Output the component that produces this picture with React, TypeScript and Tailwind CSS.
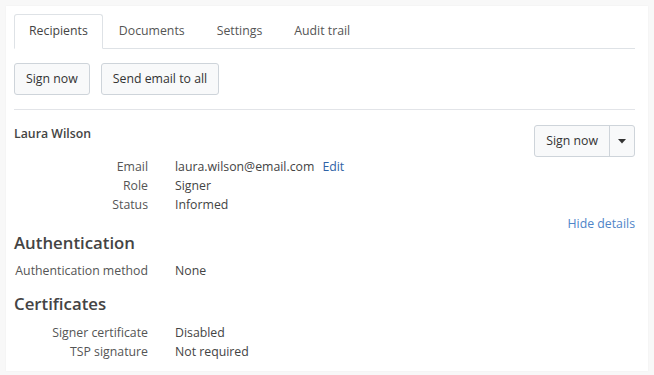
const tabs = ['Recipients', 'Documents', 'Settings', 'Audit trail'];

function Row({ label, children, className = '' }: { label: string; children: React.ReactNode; className?: string }) {
  return (
    <div className={`flex leading-[19px] ${className}`}>
      <div className="w-[134px] shrink-0 text-right whitespace-nowrap text-[#555]">{label}</div>
      <div className="ml-[27px] whitespace-nowrap text-[#444]">{children}</div>
    </div>
  );
}

export default function App() {
  return (
    <div className="min-h-[375px] bg-[#f8f8f8] p-[6px] font-['Open_Sans',sans-serif] text-[12.3px]">
      <div className="bg-white pl-2 pr-[13px] pt-2 pb-[10px] shadow-[0_0_2px_rgba(0,0,0,0.04)]">
        {/* Tabs */}
        <div className="flex border-b border-[#dee2e6] h-[35px]">
          {tabs.map((tab, i) => (
            <div
              key={tab}
              className={
                i === 0
                  ? 'px-[14px] h-[35px] flex items-center border border-[#dee2e6] border-b-white rounded-t-[3px] text-[#444] bg-white'
                  : 'px-[15px] h-[35px] flex items-center text-[#555] border border-transparent'
              }
            >
              {tab}
            </div>
          ))}
        </div>

        {/* Actions */}
        <div className="flex gap-[11px] mt-[14px]">
          <button className="h-[32px] px-[11px] border border-[#ced4da] rounded-[3px] bg-[#f8f9fa] text-[#333]">Sign now</button>
          <button className="h-[32px] px-[11px] border border-[#ced4da] rounded-[3px] bg-[#f8f9fa] text-[#333]">Send email to all</button>
        </div>

        <div className="mt-[14px] border-t border-[#e2e4e8]" />

        {/* Recipient */}
        <div className="pt-[14px]">
          <div className="flex justify-between items-start">
            <div className="font-semibold leading-[19px] text-[#444]">Laura Wilson</div>
            <div className="mt-[1px] flex h-[32px] border border-[#ced4da] rounded-[3px] bg-[#f8f9fa] text-[#333]">
              <button className="px-[11px]">Sign now</button>
              <button className="w-[25px] border-l border-[#ced4da] flex items-center justify-center">
                <svg width="8" height="5" viewBox="0 0 8 5"><path d="M0 0h8L4 4.5z" fill="#333" /></svg>
              </button>
            </div>
          </div>

          <Row label="Email">
            laura.wilson@email.com
            <a className="ml-[8px] text-[#2f63a6]">Edit</a>
          </Row>
          <Row label="Role">Signer</Row>
          <Row label="Status">Informed</Row>
          <div className="text-right leading-[19px] text-[#4f85c8]">Hide details</div>

          <h2 className="text-[16.8px] font-semibold leading-[20px] text-[#444]">Authentication</h2>
          <Row label="Authentication method" className="mt-[8px]">None</Row>

          <h2 className="mt-[14px] text-[16.8px] font-semibold leading-[20px] text-[#444]">Certificates</h2>
          <Row label="Signer certificate" className="mt-[9px]">Disabled</Row>
          <Row label="TSP signature">Not required</Row>
        </div>
      </div>
    </div>
  );
}
